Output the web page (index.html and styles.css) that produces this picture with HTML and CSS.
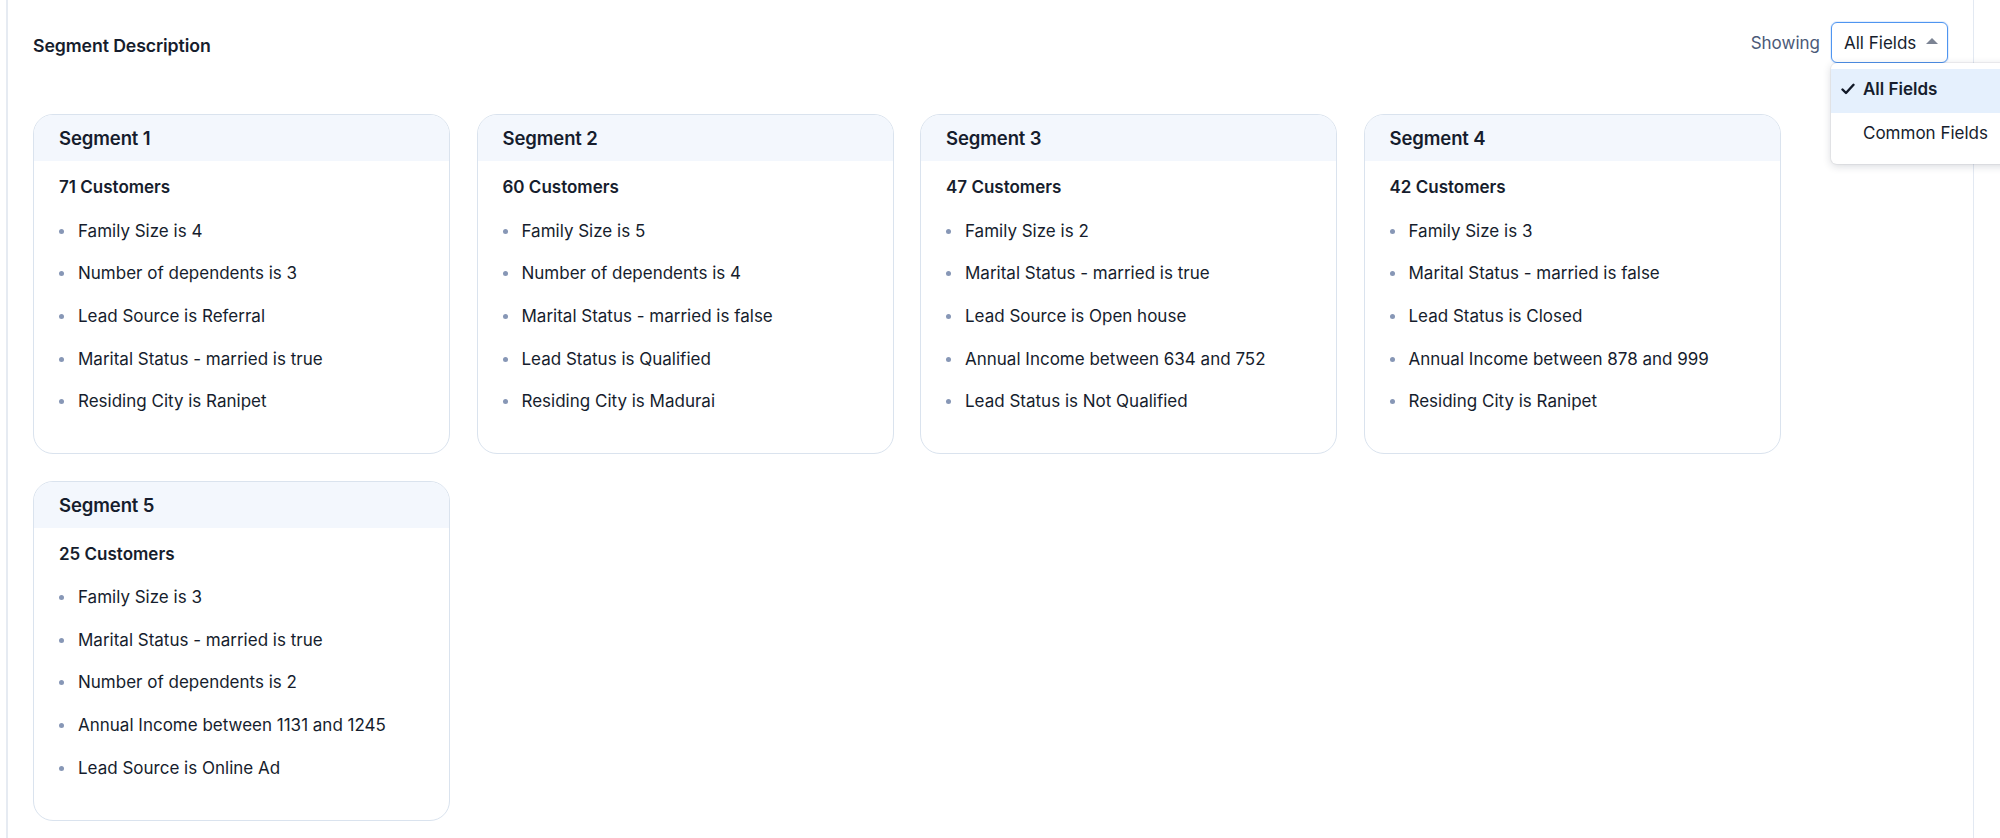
FILE: index.html
```html
<!DOCTYPE html>
<html>
<head>
<meta charset="utf-8">
<link rel="stylesheet" href="styles.css">
</head>
<body>
<div class="panel">
  <div class="topbar">
    <h2 class="title">Segment Description</h2>
    <div class="showing">
      <span class="showing-label">Showing</span>
      <div class="select">
        <button class="select-btn">All Fields <span class="caret"></span></button>
        <ul class="menu">
          <li class="menu-item active"><svg class="check" viewBox="0 0 14 12" width="14" height="12"><path d="M1.5 6.5 L5 10 L12.5 1.8" fill="none" stroke="#111827" stroke-width="2.4" stroke-linecap="round" stroke-linejoin="round"/></svg>All Fields</li>
          <li class="menu-item">Common Fields</li>
        </ul>
      </div>
    </div>
  </div>
  <div class="grid">
    <div class="card">
      <div class="card-head">Segment 1</div>
      <div class="card-body">
        <div class="count">71 Customers</div>
        <ul class="rules">
          <li>Family Size is 4</li>
          <li>Number of dependents is 3</li>
          <li>Lead Source is Referral</li>
          <li>Marital Status - married is true</li>
          <li>Residing City is Ranipet</li>
        </ul>
      </div>
    </div>
    <div class="card">
      <div class="card-head">Segment 2</div>
      <div class="card-body">
        <div class="count">60 Customers</div>
        <ul class="rules">
          <li>Family Size is 5</li>
          <li>Number of dependents is 4</li>
          <li>Marital Status - married is false</li>
          <li>Lead Status is Qualified</li>
          <li>Residing City is Madurai</li>
        </ul>
      </div>
    </div>
    <div class="card">
      <div class="card-head">Segment 3</div>
      <div class="card-body">
        <div class="count">47 Customers</div>
        <ul class="rules">
          <li>Family Size is 2</li>
          <li>Marital Status - married is true</li>
          <li>Lead Source is Open house</li>
          <li>Annual Income between 634 and 752</li>
          <li>Lead Status is Not Qualified</li>
        </ul>
      </div>
    </div>
    <div class="card">
      <div class="card-head">Segment 4</div>
      <div class="card-body">
        <div class="count">42 Customers</div>
        <ul class="rules">
          <li>Family Size is 3</li>
          <li>Marital Status - married is false</li>
          <li>Lead Status is Closed</li>
          <li>Annual Income between 878 and 999</li>
          <li>Residing City is Ranipet</li>
        </ul>
      </div>
    </div>
    <div class="card">
      <div class="card-head">Segment 5</div>
      <div class="card-body">
        <div class="count">25 Customers</div>
        <ul class="rules">
          <li>Family Size is 3</li>
          <li>Marital Status - married is true</li>
          <li>Number of dependents is 2</li>
          <li>Annual Income between 1131 and 1245</li>
          <li>Lead Source is Online Ad</li>
        </ul>
      </div>
    </div>
  </div>
</div>
</body>
</html>
```

FILE: styles.css
```css
html, body {
  margin: 0;
  padding: 0;
  background: #ffffff;
  overflow: hidden;
  height: 838px;
}

body {
  font-family: Inter, "Noto Sans", sans-serif;
  color: #161d2d;
}

.panel {
  margin-left: 6px;
  width: 1968px;
  height: 838px;
  border-left: 2px solid #e6ebf2;
  border-right: 1px solid #e3e9f2;
  box-sizing: border-box;
  padding: 0 25px 0 25px;
}

.topbar {
  display: flex;
  justify-content: space-between;
  align-items: flex-start;
  height: 114px;
}

.title {
  margin: 0;
  margin-top: 35px;
  font-size: 17.7px;
  font-weight: 600;
  line-height: 22px;
  letter-spacing: -0.1px;
}

.showing {
  display: flex;
  align-items: center;
  gap: 11px;
  margin-top: 22px;
}

.showing-label {
  font-size: 17px;
  color: #4b5a78;
}

.select {
  position: relative;
}

.select-btn {
  display: flex;
  align-items: center;
  gap: 0;
  height: 41px;
  width: 117px;
  box-sizing: border-box;
  padding: 0 0 0 12px;
  border: 1px solid #4f95f0;
  border-radius: 6px;
  background: #ffffff;
  box-shadow: 0 0 0 1px rgba(79, 149, 240, 0.15);
  font-family: Inter, "Noto Sans", sans-serif;
  font-size: 17px;
  color: #161d2d;
}

.caret {
  width: 0;
  height: 0;
  margin-left: 10px;
  border-left: 6px solid transparent;
  border-right: 6px solid transparent;
  border-bottom: 6px solid #7c8494;
  margin-top: -3px;
}

.menu {
  position: absolute;
  left: 0;
  top: 41px;
  width: 190px;
  margin: 0;
  padding: 6px 0 8px 0;
  list-style: none;
  background: #ffffff;
  border-radius: 6px;
  box-shadow: 0 2px 8px rgba(30, 40, 60, 0.18), 0 0 0 1px rgba(30, 40, 60, 0.05);
}

.menu-item {
  display: flex;
  align-items: center;
  height: 43.5px;
  box-sizing: border-box;
  padding-left: 32px;
  padding-bottom: 3px;
  font-size: 17px;
  color: #161d2d;
  position: relative;
}

.menu-item.active {
  background: #e5f0fd;
  font-weight: 600;
}

.check {
  position: absolute;
  left: 10px;
  top: 14px;
}

.grid {
  display: grid;
  grid-template-columns: repeat(4, 417px);
  grid-auto-rows: 340px;
  column-gap: 26.5px;
  row-gap: 26.5px;
}

.card {
  border: 1px solid #dae3ee;
  border-radius: 20px;
  overflow: hidden;
  background: #ffffff;
}

.card-head {
  height: 46px;
  line-height: 46px;
  background: #f3f7fd;
  padding-left: 25px;
  font-size: 18.5px;
  font-weight: 600;
  letter-spacing: -0.1px;
}

.card-body {
  padding: 13px 25px 0 25px;
}

.count {
  font-size: 17px;
  font-weight: 600;
  line-height: 26px;
}

.rules {
  list-style: none;
  margin: 9.5px 0 0 0;
  padding: 0;
}

.rules li {
  position: relative;
  padding-left: 19px;
  font-size: 17px;
  line-height: 42.67px;
  color: #161d2d;
}

.rules li::before {
  content: "";
  position: absolute;
  left: 0;
  top: 19px;
  width: 5px;
  height: 5px;
  border-radius: 50%;
  background: #8797b6;
}
```
